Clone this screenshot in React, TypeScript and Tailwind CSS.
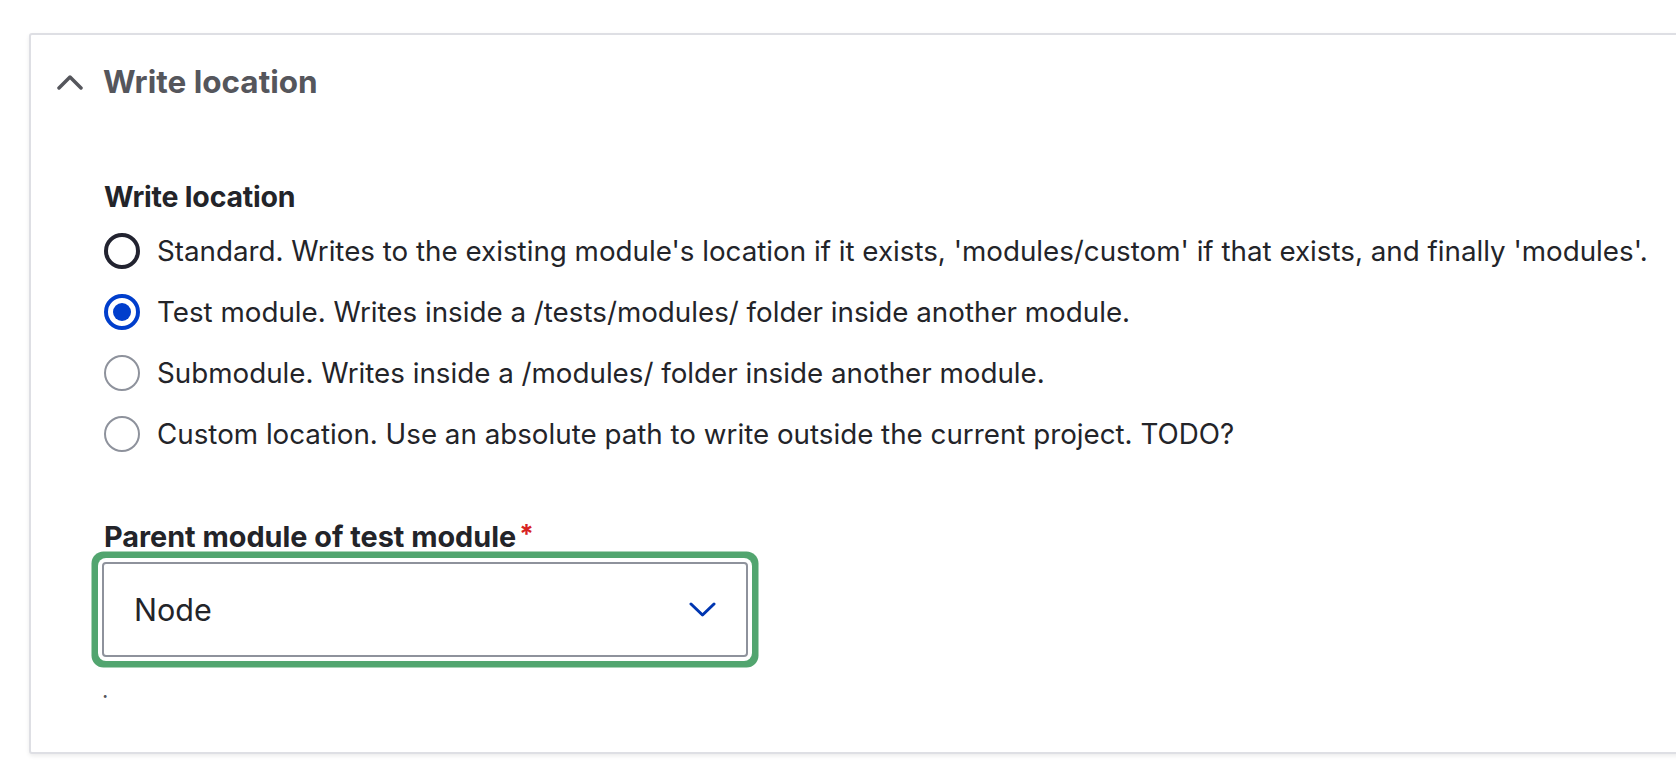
import React from "react";

const font = { fontFamily: 'Inter, "Noto Sans", "Liberation Sans", sans-serif' };

function Radio({ kind }: { kind: "dark" | "checked" | "plain" }) {
  if (kind === "checked") {
    return (
      <span className="flex h-[36px] w-[36px] shrink-0 items-center justify-center rounded-full border-[4px] border-[#003ecc] bg-white">
        <span className="h-[18px] w-[18px] rounded-full bg-[#003ecc]" />
      </span>
    );
  }
  if (kind === "dark") {
    return <span className="h-[36px] w-[36px] shrink-0 rounded-full border-[4px] border-[#222330] bg-white" />;
  }
  return <span className="h-[36px] w-[36px] shrink-0 rounded-full border-[2px] border-[#8e929c] bg-white" />;
}

const options: { kind: "dark" | "checked" | "plain"; text: string }[] = [
  {
    kind: "dark",
    text: "Standard. Writes to the existing module's location if it exists, 'modules/custom' if that exists, and finally 'modules'.",
  },
  { kind: "checked", text: "Test module. Writes inside a /tests/modules/ folder inside another module." },
  { kind: "plain", text: "Submodule. Writes inside a /modules/ folder inside another module." },
  { kind: "plain", text: "Custom location. Use an absolute path to write outside the current project. TODO?" },
];

export default function App() {
  return (
    <div className="h-[784px] w-full overflow-hidden bg-white pl-[29px] pt-[33px]" style={font}>
      <div className="w-[1700px] rounded-[3px] border-2 border-[#dedfe4] bg-white shadow-[0_2px_4px_rgba(0,0,0,0.08)]">
        {/* header */}
        <div className="flex h-[94px] items-center pl-[26px]">
          <svg width="26" height="16" viewBox="0 0 26 16" className="shrink-0">
            <polyline points="2,14 13,3 24,14" fill="none" stroke="#55565c" strokeWidth="3.5" strokeLinecap="round" strokeLinejoin="round" />
          </svg>
          <span className="ml-[20px] text-[31.5px] font-bold leading-[38px] text-[#55565c]">Write location</span>
        </div>

        {/* content */}
        <div className="pl-[73px] pt-[49px] pb-[44px] text-[#232429]">
          <div className="text-[28.5px] font-bold leading-[38px] tracking-[-0.2px]">Write location</div>
          <div className="mt-[4px] flex flex-col">
            {options.map((o, i) => (
              <div key={i} className="flex h-[61px] items-center gap-[17px]">
                <Radio kind={o.kind} />
                <span className="text-[27.75px] leading-[36px]">{o.text}</span>
              </div>
            ))}
          </div>

          <div className="mt-[57px] flex items-start text-[28.8px] font-bold leading-[32px]">
            Parent module of test module
            <span className="ml-[3px] mt-[2px] text-[26px] leading-[22px] text-[#d72222]">*</span>
          </div>

          <div className="ml-[-2px] mt-[9px] flex h-[95px] w-[646px] items-center justify-between rounded-[4px] border-2 border-[#8e929c] bg-white pl-[30px] pr-[30px] shadow-[0_0_0_4px_#ffffff,0_0_0_10.5px_#52a56f]">
            <span className="text-[30.5px] leading-[36px] text-[#232429]">Node</span>
            <svg width="27" height="16" viewBox="0 0 27 16">
              <polyline points="2,2 13.5,13 25,2" fill="none" stroke="#0036b1" strokeWidth="3" strokeLinecap="round" strokeLinejoin="round" />
            </svg>
          </div>

          <div className="ml-[-2px] mt-[15px] text-[22px] leading-[36px] text-[#55565c]">.</div>
        </div>
      </div>
    </div>
  );
}
